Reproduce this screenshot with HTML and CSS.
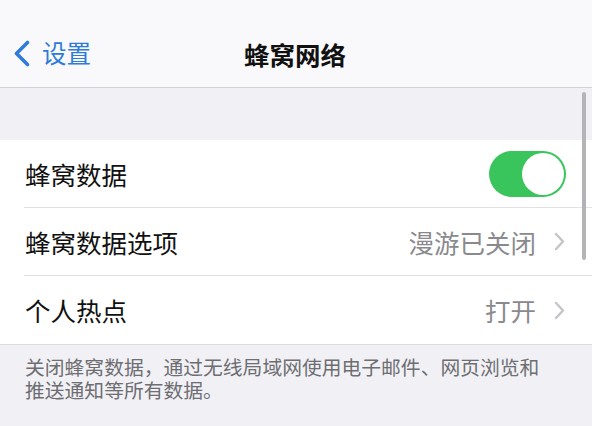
FILE: index.html
```html
<!DOCTYPE html>
<html lang="zh-CN">
<head>
<meta charset="utf-8">
<link rel="stylesheet" href="styles.css">
</head>
<body>
<div class="screen">
  <header class="nav">
    <div class="back">
      <svg class="back-icon" width="18" height="27" viewBox="0 0 18 27"><polyline points="14.5,2.5 3.5,13.5 14.5,24.5" fill="none" stroke="#2f7bd9" stroke-width="3.6" stroke-linecap="round" stroke-linejoin="round"/></svg>
      <span class="back-label">设置</span>
    </div>
    <h1 class="title">蜂窝网络</h1>
    <div class="nav-side"></div>
  </header>
  <div class="spacer"></div>
  <section class="group">
    <div class="row">
      <span class="label">蜂窝数据</span>
      <span class="toggle"><span class="knob"></span></span>
    </div>
    <div class="row">
      <span class="label">蜂窝数据选项</span>
      <span class="value">漫游已关闭</span>
      <svg class="chev" width="11" height="19" viewBox="0 0 11 19"><polyline points="2,2 9,9.5 2,17" fill="none" stroke="#c4c4c8" stroke-width="2.4" stroke-linecap="round" stroke-linejoin="round"/></svg>
    </div>
    <div class="row">
      <span class="label">个人热点</span>
      <span class="value">打开</span>
      <svg class="chev" width="11" height="19" viewBox="0 0 11 19"><polyline points="2,2 9,9.5 2,17" fill="none" stroke="#c4c4c8" stroke-width="2.4" stroke-linecap="round" stroke-linejoin="round"/></svg>
    </div>
  </section>
  <div class="footer">
    <span class="footer-line">关闭蜂窝数据，通过无线局域网使用电子邮件、网页浏览和</span>
    <span class="footer-line">推送通知等所有数据。</span>
  </div>
  <div class="scrollbar"></div>
</div>
</body>
</html>
```
FILE: styles.css
```css
html, body {
  margin: 0;
  padding: 0;
}
body {
  width: 592px;
  height: 426px;
  overflow: hidden;
  background: #f1f1f5;
  font-family: "Noto Sans CJK SC", "Noto Sans", sans-serif;
}
.screen {
  position: relative;
  height: 426px;
}
.nav {
  background: #f9f9fb;
  border-bottom: 1px solid #d3d3d7;
  display: grid;
  grid-template-columns: 1fr auto 1fr;
  align-items: center;
  padding-top: 20px;
  box-sizing: content-box;
  height: 67px;
}
.back {
  display: flex;
  align-items: center;
  padding-left: 13px;
  gap: 11px;
}
.back-label {
  color: #2f7bd9;
  font-size: 24.5px;
  line-height: 1;
}
.title {
  margin: 0;
  font-size: 25.5px;
  font-weight: 700;
  color: #111;
  line-height: 1;
  padding-right: 2px;
}
.spacer {
  height: 52px;
}
.group {
  background: #fff;
  border-bottom: 1px solid #dcdce0;
}
.row {
  height: 68px;
  display: flex;
  align-items: center;
  margin-left: 24px;
  padding-right: 26px;
  border-bottom: 1px solid #e2e2e6;
  box-sizing: border-box;
}
.row:last-child {
  border-bottom: none;
}
.label {
  flex: 1;
  font-size: 25.5px;
  color: #111;
  line-height: 1;
  padding-left: 1px;
}
.value {
  font-size: 25.5px;
  color: #8a8a8e;
  line-height: 1;
  margin-right: 18px;
}
.chev {
  margin-right: 1px;
}
.toggle {
  width: 77px;
  height: 46px;
  border-radius: 23px;
  background: #3ac45c;
  display: flex;
  justify-content: flex-end;
  align-items: center;
  padding: 2px;
  box-sizing: border-box;
}
.knob {
  width: 42px;
  height: 42px;
  border-radius: 50%;
  background: #fff;
}
.footer {
  padding: 10px 0 0 25px;
  display: flex;
  flex-direction: column;
}
.footer-line {
  display: block;
  font-size: 19.8px;
  line-height: 23px;
  height: 23px;
  color: #6d6d72;
}
.scrollbar {
  position: absolute;
  left: 582px;
  top: 92px;
  width: 4px;
  height: 168px;
  border-radius: 2px;
  background: #b4b4b8;
}
```
